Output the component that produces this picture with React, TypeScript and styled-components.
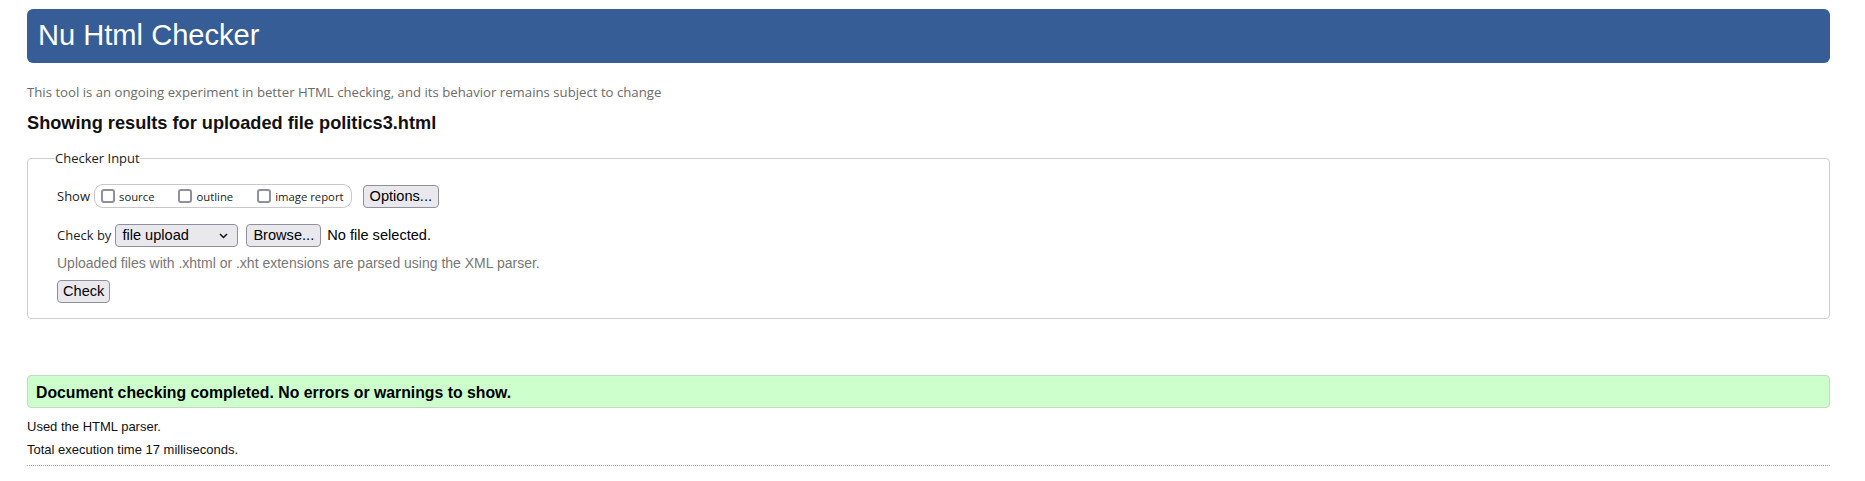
import React from "react";
import styled, { createGlobalStyle } from "styled-components";

const GlobalStyle = createGlobalStyle`
  html, body { margin: 0; padding: 0; background: #fff; }
  body {
    font-family: "Liberation Sans", Arial, sans-serif;
    font-size: 13px;
    color: #111;
  }
  * { box-sizing: border-box; }
`;

const Page = styled.div`
  padding: 9px 35px 0 27px;
`;

const Header = styled.header`
  height: 54px;
  background: #365d95;
  border-radius: 6px;
  display: flex;
  align-items: center;
  padding-left: 11px;
`;

const Title = styled.h1`
  margin: 0;
  font-weight: normal;
  font-size: 29.1px;
  line-height: 1;
  color: #fff;
`;

const About = styled.p`
  margin: 21px 0 0;
  font-family: "Open Sans", "Noto Sans", sans-serif;
  font-size: 13.2px;
  line-height: 17px;
  color: #6b6b6b;
`;

const ResultsHeading = styled.h2`
  margin: 12px 0 0;
  font-size: 18.2px;
  line-height: 21px;
  font-weight: bold;
  color: #111;
`;

const Fieldset = styled.fieldset`
  margin: 16px 0 0;
  padding: 17px 20px 15px 29px;
  border: 1px solid #cfcfcf;
  border-radius: 4px;
  min-width: 0;
`;

const Legend = styled.legend`
  margin-left: -2px;
  padding: 0;
  font-family: "Open Sans", "Noto Sans", sans-serif;
  font-size: 13px;
  line-height: 17px;
  color: #222;
`;

const Row = styled.div<{ $top?: number }>`
  display: flex;
  align-items: center;
  height: 24px;
  margin-top: ${(p) => p.$top ?? 0}px;
`;

const FieldLabel = styled.span`
  font-family: "Open Sans", "Noto Sans", sans-serif;
  font-size: 13px;
  color: #222;
  margin-right: 4px;
`;

const OptionGroup = styled.div`
  display: flex;
  align-items: center;
  gap: 24px;
  height: 24px;
  padding: 0 7px 0 6px;
  border: 1px solid #c8c8c8;
  border-radius: 9px;
`;

const CheckItem = styled.label`
  display: flex;
  align-items: center;
  gap: 4px;
  font-family: "Open Sans", "Noto Sans", sans-serif;
  font-size: 11.3px;
  color: #222;
`;

const Checkbox = styled.input.attrs({ type: "checkbox" })`
  appearance: none;
  width: 14px;
  height: 14px;
  margin: 0;
  border: 2px solid #8f8f9d;
  border-radius: 3px;
  background: #fff;
`;

const Button = styled.button<{ $left?: number }>`
  height: 23px;
  margin-left: ${(p) => p.$left ?? 0}px;
  padding: 0 6px;
  background: #e9e9ed;
  border: 1px solid #8f8f9d;
  border-radius: 4px;
  font-family: "Liberation Sans", Arial, sans-serif;
  font-size: 14.6px;
  color: #000;
  line-height: 21px;
`;

const SelectWrap = styled.div`
  position: relative;
  width: 123px;
  height: 23px;
`;

const Select = styled.select`
  appearance: none;
  width: 100%;
  height: 100%;
  margin: 0;
  padding: 0 0 0 6px;
  background: #e9e9ed;
  border: 1px solid #8f8f9d;
  border-radius: 4px;
  font-family: "Liberation Sans", Arial, sans-serif;
  font-size: 14.6px;
  color: #000;
`;

const Chevron = styled.svg`
  position: absolute;
  right: 10px;
  top: 9px;
  pointer-events: none;
`;

const FileStatus = styled.span`
  margin-left: 6px;
  font-size: 14.6px;
  color: #000;
`;

const Hint = styled.p`
  margin: 8px 0 0;
  font-size: 14px;
  line-height: 17px;
  color: #777;
`;

const CheckButton = styled(Button)`
  display: block;
  margin-top: 8px;
  padding: 0 5px;
`;

const Success = styled.div`
  margin-top: 56px;
  padding: 2px 8px 0;
  background: #ccffcc;
  border: 1px solid #c4d8c4;
  border-radius: 4px;
  font-size: 15.8px;
  font-weight: bold;
  line-height: 29px;
  color: #000;
`;

const Stat = styled.p<{ $top: number }>`
  margin: ${(p) => p.$top}px 0 0;
  line-height: 16px;
  color: #111;
`;

const Rule = styled.div`
  margin-top: 7px;
  border-top: 1px dotted #a8a8a8;
`;

export default function App() {
  return (
    <>
      <GlobalStyle />
      <Page>
        <Header>
          <Title>Nu Html Checker</Title>
        </Header>
        <About>
          This tool is an ongoing experiment in better HTML checking, and its behavior remains subject to change
        </About>
        <ResultsHeading>Showing results for uploaded file politics3.html</ResultsHeading>
        <Fieldset>
          <Legend>Checker Input</Legend>
          <Row>
            <FieldLabel>Show</FieldLabel>
            <OptionGroup>
              <CheckItem>
                <Checkbox />
                source
              </CheckItem>
              <CheckItem>
                <Checkbox />
                outline
              </CheckItem>
              <CheckItem>
                <Checkbox />
                image report
              </CheckItem>
            </OptionGroup>
            <Button $left={11}>Options...</Button>
          </Row>
          <Row $top={15}>
            <FieldLabel>Check by</FieldLabel>
            <SelectWrap>
              <Select defaultValue="file">
                <option value="file">file upload</option>
                <option value="address">address</option>
                <option value="text">text input</option>
              </Select>
              <Chevron width="9" height="6" viewBox="0 0 9 6">
                <polyline points="1,1 4.5,4.5 8,1" fill="none" stroke="#111" strokeWidth="1.5" />
              </Chevron>
            </SelectWrap>
            <Button $left={8}>Browse...</Button>
            <FileStatus>No file selected.</FileStatus>
          </Row>
          <Hint>Uploaded files with .xhtml or .xht extensions are parsed using the XML parser.</Hint>
          <CheckButton>Check</CheckButton>
        </Fieldset>
        <Success>Document checking completed. No errors or warnings to show.</Success>
        <Stat $top={11}>Used the HTML parser.</Stat>
        <Stat $top={7}>Total execution time 17 milliseconds.</Stat>
        <Rule />
      </Page>
    </>
  );
}
